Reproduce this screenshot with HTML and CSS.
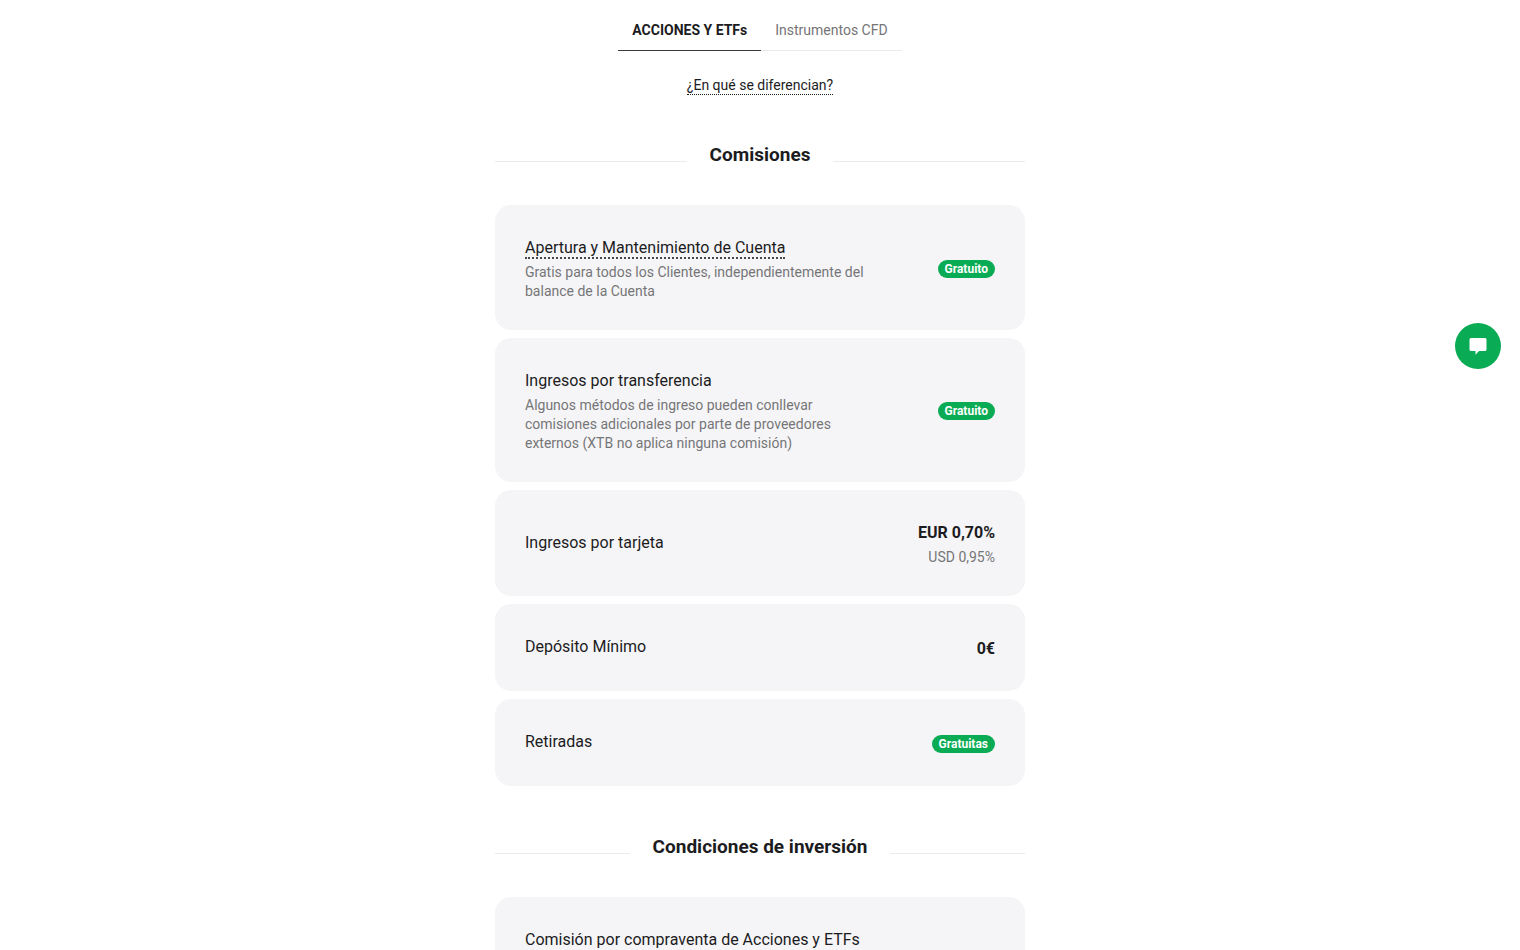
FILE: index.html
```
<!DOCTYPE html>
<html lang="es">
<head>
<meta charset="UTF-8">
<meta name="viewport" content="width=device-width, initial-scale=1.0">
<title>Comisiones y condiciones</title>
<link rel="stylesheet" href="styles.css">
</head>
<body>
<main class="pricing">
    <div class="tabs" role="tablist">
        <button class="tab active" type="button" role="tab" aria-selected="true">ACCIONES Y ETFs</button>
        <button class="tab" type="button" role="tab" aria-selected="false">Instrumentos CFD</button>
    </div>
    <p class="difference"><a class="hint" href="#diferencias">¿En qué se diferencian?</a></p>

    <section>
        <h2 class="section-title">Comisiones</h2>
        <ul class="cards">
            <li class="card">
                <div class="info">
                    <h3><a class="hint" href="#apertura">Apertura y Mantenimiento de Cuenta</a></h3>
                    <p>Gratis para todos los Clientes, independientemente del balance de la Cuenta</p>
                </div>
                <span class="badge">Gratuito</span>
            </li>
            <li class="card">
                <div class="info">
                    <h3>Ingresos por transferencia</h3>
                    <p>Algunos métodos de ingreso pueden conllevar comisiones adicionales por parte de proveedores externos (XTB no aplica ninguna comisión)</p>
                </div>
                <span class="badge">Gratuito</span>
            </li>
            <li class="card">
                <div class="info">
                    <h3>Ingresos por tarjeta</h3>
                </div>
                <div class="value">
                    <strong>EUR 0,70%</strong>
                    <p>USD 0,95%</p>
                </div>
            </li>
            <li class="card">
                <div class="info">
                    <h3>Depósito Mínimo</h3>
                </div>
                <div class="value">
                    <strong>0€</strong>
                </div>
            </li>
            <li class="card">
                <div class="info">
                    <h3>Retiradas</h3>
                </div>
                <span class="badge">Gratuitas</span>
            </li>
        </ul>
    </section>

    <section>
        <h2 class="section-title">Condiciones de inversión</h2>
        <ul class="cards">
            <li class="card">
                <div class="info">
                    <h3>Comisión por compraventa de Acciones y ETFs</h3>
                </div>
            </li>
        </ul>
    </section>
</main>
<button class="chat" type="button" aria-label="Abrir chat">
    <svg width="18" height="18" viewBox="0 0 18 18" aria-hidden="true">
        <path d="M2 1h14a1.500 1.500 0 0 1 1.500 1.500v10a1.500 1.500 0 0 1-1.500 1.500H10L6.500 17.800V14H2A1.500 1.500 0 0 1 .5 12.500v-10A1.500 1.500 0 0 1 2 1z" fill="#fff"/>
    </svg>
</button>
</body>
</html>
```
FILE: styles.css
```
* {
    box-sizing: border-box;
}
body {
    margin: 0;
    font-family: Roboto, "Liberation Sans", sans-serif;
    font-size: 14px;
    line-height: 19px;
    color: #1c1c1e;
    background-color: #fff;
}
h2, h3, p, ul {
    margin: 0;
    padding: 0;
}
.pricing {
    max-width: 530px;
    margin: 0 auto;
}
.tabs {
    display: flex;
    justify-content: center;
}
.tab {
    height: 51px;
    padding: 10px 14px 0;
    border: none;
    border-bottom: 1px solid #ebebeb;
    background: none;
    font: inherit;
    color: #757577;
    cursor: pointer;
}
.tab.active {
    border-bottom-color: #3a3a3c;
    font-weight: bold;
    color: #1c1c1e;
}
.difference {
    margin-top: 25px;
    text-align: center;
}
.hint {
    padding-bottom: 1px;
    color: inherit;
    text-decoration: none;
    border-bottom: 1px dotted #1c1c1e;
}
section {
    padding-bottom: 1px;
}
.section-title {
    display: flex;
    align-items: center;
    gap: 23px;
    margin: 46px 0 36px;
    font-size: 19px;
    line-height: 28px;
}
.section-title::before,
.section-title::after {
    content: "";
    flex: 1;
    height: 1px;
    margin-top: 13px;
    background-color: #ebebee;
}
.cards {
    display: flex;
    flex-direction: column;
    gap: 8px;
    list-style: none;
}
.card {
    display: flex;
    justify-content: space-between;
    align-items: center;
    padding: 31px 30px 29px;
    border-radius: 16px;
    background-color: #f5f5f7;
}
.info {
    max-width: 340px;
}
.info h3 {
    margin-bottom: 4px;
    font-size: 16px;
    font-weight: normal;
    line-height: 23px;
}
.info .hint {
    padding-bottom: 0;
    border-bottom: 2px dotted #48484a;
}
.card p {
    color: #757577;
}
.value {
    text-align: right;
}
.value strong {
    display: block;
    font-size: 16px;
    line-height: 23px;
}
.value p {
    margin-top: 4px;
}
.badge {
    padding: 0 7px;
    border-radius: 9px;
    background-color: #09ab54;
    color: #fff;
    font-size: 12px;
    font-weight: bold;
    line-height: 18px;
}
.chat {
    position: fixed;
    top: 323px;
    right: 19px;
    display: flex;
    align-items: center;
    justify-content: center;
    width: 46px;
    height: 46px;
    padding: 0;
    border: none;
    border-radius: 50%;
    background-color: #09ab54;
    cursor: pointer;
}
```
